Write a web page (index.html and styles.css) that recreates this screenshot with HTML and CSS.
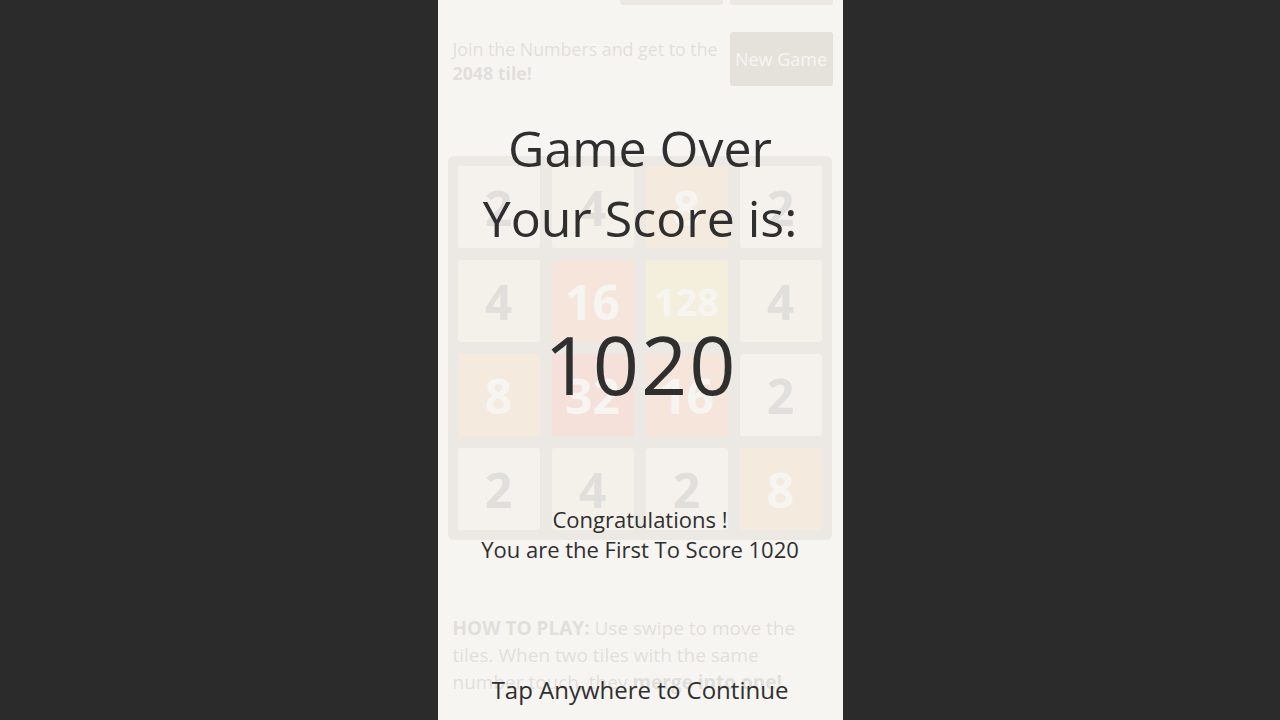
FILE: index.html
```html
<!DOCTYPE html>
<html lang="en">
<head>
<meta charset="utf-8">
<title>2048 - Game Over</title>
<link rel="stylesheet" href="styles.css">
</head>
<body>
<div class="phone">
  <div class="game">
    <div class="scores">
      <div class="score-box"></div>
      <div class="score-box"></div>
    </div>
    <div class="intro">
      <p class="intro-text">Join the Numbers and get to the <b>2048 tile!</b></p>
      <div class="btn">New Game</div>
    </div>
    <div class="board">
      <div class="tile t2">2</div>
      <div class="tile t4">4</div>
      <div class="tile t8">8</div>
      <div class="tile t2">2</div>
      <div class="tile t4">4</div>
      <div class="tile t16">16</div>
      <div class="tile t128">128</div>
      <div class="tile t4">4</div>
      <div class="tile t8">8</div>
      <div class="tile t32">32</div>
      <div class="tile t16">16</div>
      <div class="tile t2">2</div>
      <div class="tile t2">2</div>
      <div class="tile t4">4</div>
      <div class="tile t2">2</div>
      <div class="tile t8">8</div>
    </div>
    <p class="howto"><b>HOW TO PLAY:</b> Use swipe to move the tiles. When two tiles with the same number touch, they <b>merge into one!</b></p>
  </div>
  <div class="overlay">
    <div class="over-title">Game Over<br>Your Score is:</div>
    <div class="over-score">1020</div>
    <div class="over-msg">Congratulations !<br>You are the First To Score 1020</div>
    <div class="over-tap">Tap Anywhere to Continue</div>
  </div>
</div>
</body>
</html>
```

FILE: styles.css
```css
html, body {
  margin: 0;
  padding: 0;
  background: #2b2b2b;
  height: 720px;
  overflow: hidden;
}

.phone {
  position: relative;
  width: 405px;
  height: 720px;
  margin: 0 auto;
  background: #faf8ef;
  overflow: hidden;
  font-family: "Open Sans", "Noto Sans", sans-serif;
  color: #776e65;
}

.game {
  display: flex;
  flex-direction: column;
}

.scores {
  display: flex;
  justify-content: flex-end;
  gap: 7px;
  padding-right: 10px;
  height: 5px;
}

.score-box {
  width: 103px;
  height: 5px;
  background: #bbada0;
  border-radius: 0 0 3px 3px;
}

.intro {
  display: flex;
  align-items: center;
  justify-content: space-between;
  margin-top: 27px;
  padding: 0 10px 0 15px;
}

.intro-text {
  margin: 4px 0 0;
  width: 275px;
  font-size: 17.8px;
  line-height: 24px;
}

.btn {
  width: 103px;
  height: 54px;
  display: flex;
  align-items: center;
  justify-content: center;
  background: #8f7a66;
  color: #f9f6f2;
  font-size: 18px;
  border-radius: 3px;
}

.board {
  margin: 70px 10px 0;
  width: 384px;
  height: 384px;
  box-sizing: border-box;
  padding: 10px;
  background: #bbada0;
  border-radius: 6px;
  display: grid;
  grid-template-columns: repeat(4, 82px);
  grid-template-rows: repeat(4, 82px);
  gap: 12px;
}

.tile {
  border-radius: 3px;
  display: flex;
  align-items: center;
  justify-content: center;
  font-weight: 700;
  font-size: 48px;
  color: #f9f6f2;
}

.t2 { background: #eee4da; color: #776e65; }
.t4 { background: #ede0c8; color: #776e65; }
.t8 { background: #f2b179; }
.t16 { background: #f59563; }
.t32 { background: #f67c5f; }
.t128 { background: #edcf72; font-size: 38px; }

.howto {
  margin: 75px 0 0;
  padding: 0 30px 0 15px;
  font-size: 19px;
  line-height: 27px;
}

.overlay {
  position: absolute;
  inset: 0;
  background: rgba(245, 244, 242, 0.84);
  display: flex;
  flex-direction: column;
  align-items: center;
  text-align: center;
  color: #2f2f2f;
}

.over-title {
  margin-top: 113px;
  font-size: 50px;
  line-height: 70px;
}

.over-score {
  margin-top: 61px;
  font-size: 81px;
  line-height: 100px;
  letter-spacing: 2px;
  padding-left: 2px;
}

.over-msg {
  margin-top: 90px;
  font-size: 22px;
  line-height: 30px;
}

.over-tap {
  margin-top: 110px;
  font-size: 24px;
  line-height: 32px;
}
```
